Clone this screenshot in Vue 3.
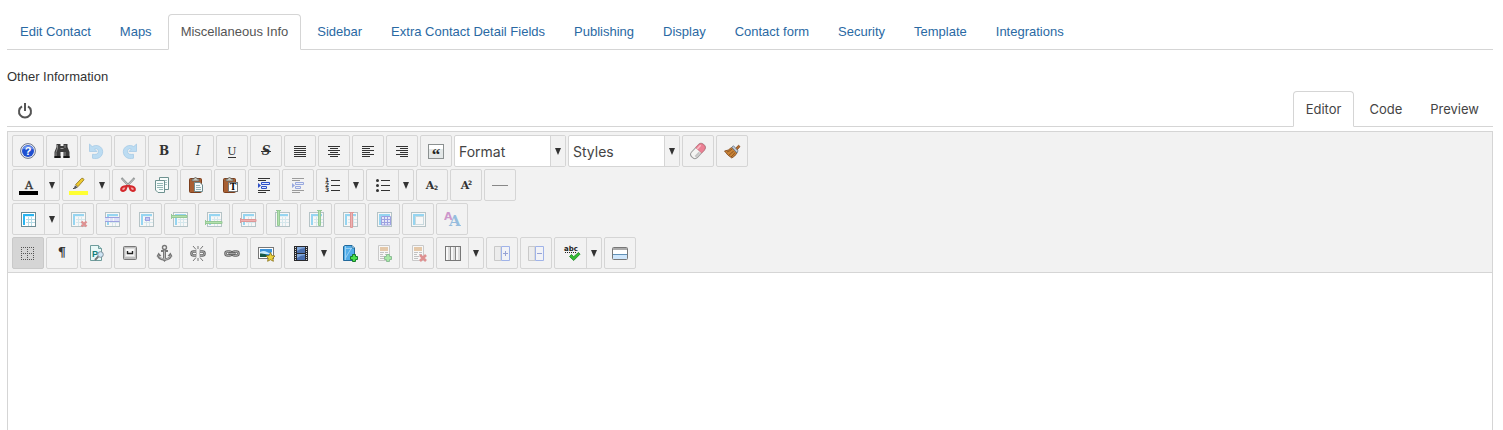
<template>
  <div class="page">
    <ul class="tabs">
      <li v-for="tab in tabs" :key="tab">
        <a href="#" :class="{ active: tab === currentTab }" @click.prevent="currentTab = tab">{{ tab }}</a>
      </li>
    </ul>

    <label class="field-label" for="misc">Other Information</label>

    <div class="editor-head">
      <button type="button" class="power" aria-label="Toggle editor">
        <svg width="16" height="16" viewBox="0 0 16 16" fill="none" stroke="#555" stroke-width="2">
          <path d="M5 3.4A6 6 0 1 0 11 3.4" />
          <path d="M8 0V8" />
        </svg>
      </button>
      <ul class="tabs modes">
        <li v-for="mode in modes" :key="mode">
          <a href="#" :class="{ active: mode === currentMode }" @click.prevent="currentMode = mode">{{ mode }}</a>
        </li>
      </ul>
    </div>

    <div class="editor">
      <div class="toolbar">
        <div v-for="(row, i) in rows" :key="i" class="row">
          <template v-for="item in row" :key="item.name">
            <div v-if="item.type === 'select'" class="picker">
              <select :aria-label="item.name">
                <option>{{ item.name }}</option>
              </select>
              <span class="picker-arrow">
                <svg width="6" height="7" viewBox="0 0 6 7"><path d="M0 0H6L3 7Z" fill="#333" /></svg>
              </span>
            </div>
            <div v-else class="tool" :class="{ split: item.type === 'split', disabled: item.off, pressed: item.on }">
              <button type="button" class="main" :aria-label="item.name" :disabled="item.off">
                <svg width="20" height="20" viewBox="0 0 20 20" v-html="icons[item.name]"></svg>
              </button>
              <button v-if="item.type === 'split'" type="button" class="more" :aria-label="item.name + ' options'">
                <svg width="6" height="7" viewBox="0 0 6 7"><path d="M0 0H6L3 7Z" fill="#333" /></svg>
              </button>
            </div>
          </template>
        </div>
      </div>
      <textarea id="misc" v-model="content"></textarea>
    </div>
  </div>
</template>

<script setup>
import { ref } from 'vue'

const tabs = [
  'Edit Contact', 'Maps', 'Miscellaneous Info', 'Sidebar', 'Extra Contact Detail Fields',
  'Publishing', 'Display', 'Contact form', 'Security', 'Template', 'Integrations'
]
const modes = ['Editor', 'Code', 'Preview']

const currentTab = ref('Miscellaneous Info')
const currentMode = ref('Editor')
const content = ref('')

const btn = (name) => ({ name })
const off = (name) => ({ name, off: true })
const split = (name) => ({ name, type: 'split' })
const select = (name) => ({ name, type: 'select' })

const rows = [
  [
    ...['help', 'find'].map(btn), ...['undo', 'redo'].map(off),
    ...['bold', 'italic', 'underline', 'strike', 'justify', 'center', 'left', 'right', 'quote'].map(btn),
    select('Format'), select('Styles'), btn('eraser'), btn('brush')
  ],
  [
    split('color'), split('highlight'),
    ...['cut', 'copy', 'paste', 'pastetext', 'indent'].map(btn), off('outdent'),
    split('numlist'), split('bullist'), ...['sub', 'sup', 'hr'].map(btn)
  ],
  [
    split('table'),
    ...['tabledelete', 'rowprops', 'cellprops', 'rowbefore', 'rowafter', 'rowdelete',
      'colbefore', 'colafter', 'coldelete', 'splitcells', 'mergecells', 'textcase'].map(off)
  ],
  [
    { name: 'guides', on: true },
    ...['pilcrow', 'preview', 'nbsp', 'anchor', 'unlink', 'link', 'image'].map(btn),
    split('media'), btn('book'), off('articleadd'), off('articleremove'),
    split('columns'), off('columnadd'), off('columnremove'), split('spell'), btn('panel')
  ]
]

// horizontal strokes from [x1, x2, y] triples
const lines = (list, color = '#333') =>
  `<path d="${list.map(([a, b, y]) => `M${a} ${y}H${b}`).join('')}" stroke="${color}" fill="none"/>`

const glyph = (text, x = 10, size = 11, extra = '') =>
  `<text x="${x}" y="14" font-family="DejaVu Serif" font-size="${size}" text-anchor="middle" fill="#333" ${extra}>${text}</text>`

const align = (a, b) =>
  lines([5.5, 7.5, 9.5, 11.5, 13.5, 15.5].map((y, i) => (i % 2 ? [a, b, y] : [4, 16, y])))

const grid = (cells = '<path d="M8 10.5H17M8 13.5H17M10.5 8V17M13.5 8V17" stroke="#b4dbe6"/>') => `
  <rect x="3.5" y="3.5" width="14" height="14" fill="#fff" stroke="#6c8b93"/>
  <path d="M5 5H16V7H7V16H5Z" fill="#29b4f0"/>
  <path d="M7.5 7.5H16" stroke="#d4eef8"/>${cells}`

const cross = '<path d="M13.5 12.5L18.5 17.5M18.5 12.5L13.5 17.5" stroke="#c81e1e" stroke-width="2.4"/>'
const greenPlus = '<path d="M12.5 11.5H15.5V13.5H17.5V16.5H15.5V18.5H12.5V16.5H10.5V13.5H12.5Z" fill="#4ae04a" stroke="#167c2b"/>'

const indent = `${lines([[4, 16, 3.5], [4, 12, 5.5], [4, 16, 15.5], [4, 12, 17.5]])}
  <path d="M7.5 7.5H15.5V9.5H7.5ZM7.5 11.5H12.5V13.5H7.5Z" fill="#dfe8ff" stroke="#2d50c8"/>
  <path d="M4 8L7 10.5L4 13Z" fill="#2d50c8"/>`

const clipboard = `<rect x="3.5" y="3.5" width="12" height="14" rx="1" fill="#a85f32" stroke="#7b3e1c"/>
  <path d="M6 6V4H8C8 2 11 2 11 4H13V6Z" fill="#c9c9bf" stroke="#62625c" stroke-width=".8"/>`

const article = `<path d="M4.5 2.5H15.5V17.5H4.5Z" fill="#fff" stroke="#999"/>
  <rect x="6" y="4" width="8" height="4" fill="#d59752"/>
  ${lines([[6, 10, 9.5], [11, 14, 9.5], [6, 9, 11.5], [11, 14, 11.5], [6, 11, 13.5], [6, 10, 15.5]], '#888')}`

const chain = `<g fill="none"><g stroke="#666" stroke-width="2.6"><rect x="3.5" y="8.5" width="6" height="4" rx="2"/><rect x="10.5" y="8.5" width="6" height="4" rx="2"/></g>
  <g stroke="#bbb" stroke-width=".8"><rect x="3.5" y="8.5" width="6" height="4" rx="2"/><rect x="10.5" y="8.5" width="6" height="4" rx="2"/></g></g>`

const halfColumn = (sign) => `<path d="M3 3.5H9V17.5H2.5V3.5Z" fill="#e6e6e6" stroke="#999"/>
  <path d="M9.5 3.5H17.5V17.5H9.5Z" fill="#f3f6ff" stroke="#3f68dc"/>
  <path d="${sign}" stroke="#2a45b4" fill="none"/>`

const undo = `<path d="M3.5 3V10.5H11L8.6 8C11 7 12.6 8.7 12.4 11C12.2 13 10 13.8 6.5 13.3V17.2C12 18.6 16.5 16 16.7 10.7C16.7 5.5 10.7 2.8 6.2 5.6Z" fill="#7cc3f2" stroke="#3f93d4" stroke-width=".7"/>`

const icons = {
  help: `<circle cx="10" cy="10" r="7.4" fill="#eef1f6" stroke="#69718a"/>
    <circle cx="10" cy="10" r="6" fill="#1f4fd0"/><path d="M4.6 8.5A5.6 5.6 0 0 1 15.4 8.5Q10 6 4.6 8.5Z" fill="#6c93ee"/>
    <text x="10" y="14" font-family="Liberation Sans" font-weight="bold" font-size="11" text-anchor="middle" fill="#fff">?</text>`,
  find: `<path d="M4.5 3H8.5V5H11.5V3H15.5V6L17.5 11V17H11.5V11H8.5V17H2.5V11L4.5 6Z" fill="#3c3c3c"/>
    <path d="M5.5 4V7L4 11.5V15.5M13 4V7M13 11V15.5" stroke="#8b8b8b" fill="none"/><path d="M8.5 7.5H11.5" stroke="#999"/>
    <path d="M2.5 16H8.5M11.5 16H17.5" stroke="#161616" stroke-width="2"/>`,
  undo,
  redo: `<g transform="matrix(-1 0 0 1 20 0)">${undo}</g>`,
  bold: glyph('B', 10, 12, 'font-weight="bold"'),
  italic: glyph('I', 10, 12, 'font-style="italic"'),
  underline: glyph('U', 10, 11) + lines([[6, 14, 16.5]]),
  strike: glyph('S', 10, 12, 'font-style="italic" font-weight="bold"') + lines([[5, 15, 10.5]]),
  justify: align(4, 16),
  center: align(6, 14),
  left: align(4, 12),
  right: align(8, 16),
  quote: `<rect x="2.5" y="3.5" width="15" height="14" fill="#e3e7e7" stroke="#8b9090"/><path d="M3 4H17V8H3Z" fill="#fff"/>
    <text x="10" y="19" font-family="Liberation Serif" font-weight="bold" font-size="17" text-anchor="middle" fill="#222">“</text>`,
  eraser: `<g transform="rotate(-47 10 10)"><rect x="1.5" y="6" width="17" height="8" rx="3.4" fill="#f4f4f2" stroke="#999"/>
    <path d="M11 6H15.2Q18.5 6.4 18.5 10T15.2 14H11Z" fill="#ec8195" stroke="#cc7180" stroke-width=".8"/>
    <path d="M4 12H10" stroke="#c4c4c4" stroke-width="2"/><path d="M11 8H16" stroke="#f9bdc7" stroke-width="1.5"/></g>`,
  brush: `<path d="M13 8L16.5 4.2L18 5.6L15 9Z" fill="#b96d2d" stroke="#7c451b" stroke-width=".8"/>
    <path d="M2.5 10Q6.5 9.8 9.5 6.5L15 12Q13 15.5 9.8 17Q5.5 14.5 2.5 10Z" fill="#c98337" stroke="#7c451b" stroke-width=".8"/>
    <path d="M5 11Q8 10 10 8M7 14Q10 12 11.5 10M9 16Q11.5 14 13 11.5" stroke="#7f4b1b" fill="none" stroke-width=".8"/>
    <path d="M9.8 6.2L11.5 4.8L16 9.8L15 12Z" fill="#c7d0da" stroke="#5f6f83" stroke-width=".8"/>`,

  color: glyph('A', 11, 11, 'stroke="#333" stroke-width=".3"') + '<rect x="1" y="16" width="19" height="4"/>',
  highlight: `<path d="M5 13.5Q7 13.7 8.5 12.5" stroke="#444" fill="none"/><path d="M7 10.2L9.8 12.6L8 13.3L6 13Z" fill="#555"/>
    <path d="M7.6 9.6L13.5 3.4Q15.5 2.6 16 4.8L10 11.7Z" fill="#edc92f" stroke="#8d741d" stroke-width=".8"/>
    <rect x="1" y="16" width="19" height="4" fill="#ff3"/>`,
  cut: `<path d="M3.5 3L13 13M16.5 3L7 13" stroke="#858a8a" stroke-width="2"/><path d="M4 3.5L11 11M16 3.5L9 11" stroke="#e5e8e8" stroke-width=".7"/>
    <g fill="#f2a3a5" stroke="#d4282c" stroke-width="2"><path d="M9 11L6 11.4Q2.6 12.6 3.2 15Q5 17.2 7.5 14.8Z"/><path d="M11 11L14 11.4Q17.4 12.6 16.8 15Q15 17.2 12.5 14.8Z"/></g>`,
  copy: `<path d="M7.5 2.5H16.5V14.5H10L7.5 12Z" fill="#f7fcfb" stroke="#6e9290"/>
    <path d="M9 5.5H15M9 7.5H15M9 9.5H15" stroke="#a4c2c0"/>
    <path d="M3.5 5.5H12.5V17.5H6L3.5 15Z" fill="#f7fcfb" stroke="#6e9290"/><path d="M5 8.5H11M5 10.5H11M5 12.5H11M7 14.5H11" stroke="#93b8b5"/>`,
  paste: `${clipboard}<path d="M8.5 7.5H14L16.5 10V16.5H8.5Z" fill="#f4f9f9" stroke="#6e8b8f"/>
    <path d="M10 10.5H14M10 12.5H15M10 14.5H15" stroke="#93b3b6"/>`,
  pastetext: `${clipboard}<rect x="8.5" y="7.5" width="9" height="9" fill="#fff" stroke="#777"/>
    <text x="13" y="15" font-family="Liberation Serif" font-weight="bold" font-size="10" text-anchor="middle">T</text>`,
  indent,
  outdent: indent,
  numlist: `${lines([[9, 18, 5.5], [9, 18, 10.5], [9, 18, 15.5]])}
    <g font-family="DejaVu Sans" font-weight="bold" font-size="6" fill="#333"><text x="3" y="7">1</text><text x="3" y="12">2</text><text x="3" y="17">3</text></g>`,
  bullist: `${lines([[9, 18, 5.5], [9, 18, 10.5], [9, 18, 15.5]])}
    <g fill="#333"><circle cx="5.5" cy="5.5" r="1.5"/><circle cx="5.5" cy="10.5" r="1.5"/><circle cx="5.5" cy="15.5" r="1.5"/></g>`,
  sub: glyph('A', 8, 11, 'font-weight="bold"') + '<text x="12" y="15" font-family="DejaVu Sans" font-weight="bold" font-size="6" fill="#333">2</text>',
  sup: glyph('A', 9, 11, 'font-weight="bold"') + '<text x="12" y="10" font-family="DejaVu Sans" font-weight="bold" font-size="6" fill="#333">2</text>',
  hr: lines([[2, 18, 10.5]], '#888'),

  table: grid(),
  tabledelete: grid() + cross,
  rowprops: grid() + '<path d="M3 8.5H17.5V12.5H3Z" fill="#c3cbff"/><path d="M3 8.5H17.5M3 12.5H17.5" stroke="#3740cc"/><path d="M7.5 9V12M11.5 9V12" stroke="#fff"/>',
  cellprops: grid() + '<rect x="9.5" y="8.5" width="4" height="3" fill="#8d95f5" stroke="#3740cc"/>',
  rowbefore: grid() + '<path d="M1.5 5V10" stroke="#259629"/><path d="M1.5 6.5H17V8.5H1.5Z" fill="#69d05a" stroke="#259629"/>',
  rowafter: grid() + '<path d="M1.5 11V16" stroke="#259629"/><path d="M1.5 12.5H18V14.5H1.5Z" fill="#69d05a" stroke="#259629"/>',
  rowdelete: grid() + '<path d="M2.5 9V14" stroke="#c42b2b"/><path d="M2.5 10.5H18V12.5H2.5Z" fill="#e66" stroke="#c42b2b"/>',
  colbefore: grid() + '<path d="M4 1.5H9" stroke="#259629"/><path d="M5.5 1.5H7.5V16.5H5.5Z" fill="#69d05a" stroke="#259629"/>',
  colafter: grid() + '<path d="M11 1.5H16" stroke="#259629"/><path d="M12.5 1.5H14.5V16.5H12.5Z" fill="#69d05a" stroke="#259629"/>',
  coldelete: grid() + '<path d="M9 3.5H14" stroke="#c42b2b"/><path d="M10.5 3.5H12.5V18.5H10.5Z" fill="#e66" stroke="#c42b2b"/>',
  splitcells: grid('<path d="M7.5 7.5H16.5V16H7.5ZM7.5 10.5H16.5M7.5 13.5H16.5M10.5 7V16M13.5 7V16" fill="#d9dcff" stroke="#3740cc"/>'),
  mergecells: grid('<rect x="7.5" y="7.5" width="8" height="8" fill="#fff" stroke="#96bcc8"/>'),
  textcase: `<text x="2" y="11" font-family="DejaVu Sans" font-weight="bold" font-size="11" fill="#a22b9e">A</text>
    <text x="7" y="17" font-family="DejaVu Serif" font-weight="bold" font-size="15" fill="#297fc7">A</text>`,

  guides: `<g fill="none" stroke="#555" stroke-dasharray="1 1"><path d="M3 4.5H16M3 10.5H16M3 16.5H16"/>
    <path d="M3.5 4V17M9.5 4V17M15.5 4V17"/></g>`,
  pilcrow: '<text x="10" y="14" font-family="DejaVu Serif" font-weight="bold" font-size="13" text-anchor="middle" fill="#333">¶</text>',
  preview: `<path d="M4.5 2.5H12.5L15.5 5.5V17.5H4.5Z" fill="#e9f8f7" stroke="#6e9c9c"/><path d="M12.5 2.5V5.5H15.5" fill="#bedcdb" stroke="#6e9c9c"/>
    <text x="6" y="14" font-family="Liberation Sans" font-weight="bold" font-size="9" fill="#137f7c">P</text>
    <path d="M12.4 13.4L9 17" stroke="#777" stroke-width="2"/><circle cx="14.5" cy="11.5" r="2.8" fill="#cfe5f5" stroke="#7f919c"/>`,
  nbsp: `<rect x="3.5" y="3.5" width="13" height="13" rx="1" fill="#bdbdbd" stroke="#777"/><rect x="5.5" y="5.5" width="9" height="8" fill="#f7f7f7" stroke="#ddd"/>
    <path d="M7.5 8V10.5H12.5V8" fill="none" stroke="#222" stroke-width="1.4"/>`,
  anchor: `<g fill="none" stroke="#777"><circle cx="10.5" cy="4.5" r="2" stroke-width="1.4"/><path d="M7 8H14" stroke-width="2"/>
    <path d="M10.5 7V17" stroke-width="3"/><path d="M4 12Q5 16.5 10.5 16.5T17 12" stroke-width="2.4"/></g>
    <path d="M2.5 13.5L4.5 9.5L7.5 13ZM18.5 13.5L16.5 9.5L13.5 13ZM8 16L10.5 19L13 16Z" fill="#777"/>
    <path d="M10.5 7.5V16M4.5 12.5Q6 16 10.5 16.3T16.5 12.5" stroke="#ccc" fill="none" stroke-width=".8"/>`,
  unlink: `${chain}<path d="M8.5 6H11.5V15H8.5Z" fill="#f2f2f2"/><path d="M5 3L8 6.5M15 3L12 6.5M10 3V6M5 18L8 14.5M15 18L12 14.5M10 15V18" stroke="#777"/>`,
  link: `${chain}<path d="M6.5 10.5H13.5" stroke="#444" stroke-width="2"/><path d="M7 10.5H13" stroke="#ccc" stroke-width=".7"/>`,
  image: `<rect x="2.5" y="4.5" width="15" height="11" fill="#fff" stroke="#777"/><rect x="4" y="6" width="12" height="8" fill="#3c93d9"/>
    <path d="M4 9Q8 7 11 9T16 9V11H4Z" fill="#c7e9fb"/><path d="M4 10.5Q8 10 12 12.5H16V14H4Z" fill="#175a46"/>
    <path d="M14.5 9.5L15.9 12.6L19 13L16.8 15.2L17.4 18.3L14.5 16.7L11.6 18.3L12.2 15.2L10 13L13.1 12.6Z" fill="#eed33c" stroke="#8a7218" stroke-width=".8"/>`,
  media: `<rect x="4" y="3" width="14" height="15" fill="#29292c"/><path d="M5.5 4V18M16.5 4V18" stroke="#ddd" stroke-dasharray="1 1"/>
    <path d="M7 4H15V10H7ZM7 11H15V17H7Z" fill="#4a6fae"/><path d="M7 8Q11 5 15 5V4H7ZM7 15Q11 12 15 12V11H7Z" fill="#83a9dc"/>`,
  book: `<path d="M3.5 3.5L5 2.5H12L14.5 5V17.5H3.5Z" fill="#52ade9" stroke="#22699b"/><path d="M5.5 3V17M5.5 15L12 4M5.5 5.5H12" stroke="#abd9f5" fill="none" stroke-width=".8"/>
    <path d="M12 2.5V5H14.5" fill="#d9effb" stroke="#22699b" stroke-width=".8"/>${greenPlus}`,
  articleadd: article + greenPlus,
  articleremove: `${article}<path d="M12 12L18 18M18 12L12 18" stroke="#c81e1e" stroke-width="2.6"/>`,
  columns: `<rect x="3.5" y="3.5" width="15" height="14" fill="#f8f8f8" stroke="#777"/><path d="M7 4V17M12 4V17M17 4V17" stroke="#ddd" stroke-width="2"/>
    <path d="M8.5 4V17M13.5 4V17" stroke="#888"/>`,
  columnadd: halfColumn('M11 10.5H16M13.5 8V13'),
  columnremove: halfColumn('M11 10.5H16'),
  spell: `<text x="4" y="8" font-family="DejaVu Sans" font-weight="bold" font-size="7" fill="#222">abc</text>
    <path d="M5 9.5H16" stroke="#222" stroke-dasharray="1 1"/>
    <path d="M9.5 13.5L11.5 11.5L13.7 13.7L18.5 9.5L20 11.2L13.7 17.5Z" fill="#35bd35" stroke="#168321" stroke-width=".8"/>`,
  panel: `<rect x="2.5" y="4.5" width="15" height="12" rx="1" fill="#fff" stroke="#777"/><path d="M3 5H17V7H3Z" fill="#aaa"/>
    <path d="M3 11H17V16H3Z" fill="#cfe6fb"/><path d="M3 11.5H17" stroke="#6292b8"/>`
}
</script>

<style>
body {
  margin: 0;
  background: #fff;
}
</style>

<style scoped>
.page {
  box-sizing: border-box;
  display: flex;
  flex-direction: column;
  min-height: 100vh;
  padding: 14px 10px 0 7px;
  font-family: "Liberation Sans", Arial, sans-serif;
  font-size: 13px;
  line-height: 18px;
  color: #333;
}

.tabs {
  display: flex;
  gap: 3px;
  margin: 0;
  padding: 0;
  list-style: none;
  border-bottom: 1px solid #d5d5d5;
}

.tabs li {
  margin-bottom: -1px;
}

.tabs a {
  display: block;
  padding: 8px 12px;
  border: 1px solid transparent;
  border-radius: 4px 4px 0 0;
  color: #2a69a3;
  text-decoration: none;
  white-space: nowrap;
}

.tabs a.active {
  background: #fff;
  border-color: #d5d5d5;
  border-bottom-color: #fff;
  color: #555;
}

.field-label {
  margin-top: 18px;
}

.editor-head {
  display: flex;
  align-items: flex-end;
  justify-content: space-between;
  margin-top: 5px;
  border-bottom: 1px solid #d5d5d5;
}

.power {
  display: flex;
  padding: 10px 10px 7px;
  border: none;
  background: none;
  cursor: pointer;
}

.modes {
  gap: 2px;
  padding-right: 1px;
  border-bottom: none;
  font-family: Inter, sans-serif;
}

.modes a,
.modes a.active {
  color: #444;
}

.editor {
  display: flex;
  flex: 1;
  flex-direction: column;
  margin-top: 4px;
  border: 1px solid #d5d5d5;
  border-bottom: none;
}

.toolbar {
  display: flex;
  flex-direction: column;
  gap: 2px;
  padding: 3px 4px;
  background: #f2f2f2;
  border-bottom: 1px solid #d5d5d5;
}

.row {
  display: flex;
  flex-wrap: wrap;
  gap: 2px;
}

.tool {
  display: flex;
  box-sizing: border-box;
  height: 32px;
  border: 1px solid #d5d5d5;
  border-radius: 2px;
}

.tool button {
  display: flex;
  align-items: center;
  padding: 0 5px;
  border: none;
  background: none;
  cursor: pointer;
}

.tool svg {
  overflow: visible;
}

.tool.split .main {
  padding-right: 6px;
}

.tool .more {
  padding: 0 4px;
  border-left: 1px solid #d5d5d5;
}

.tool.pressed {
  background: #d5d5d5;
  border-color: #c9c9c9;
}

.tool.disabled svg {
  opacity: 0.45;
}

.picker {
  position: relative;
  width: 112px;
  height: 32px;
}

.picker select {
  box-sizing: border-box;
  width: 100%;
  height: 100%;
  padding: 0 20px 0 4px;
  border: 1px solid #d5d5d5;
  border-radius: 2px;
  background: #fff;
  color: #444;
  font-family: Inter, sans-serif;
  font-size: 14px;
  appearance: none;
}

.picker-arrow {
  position: absolute;
  top: 1px;
  right: 1px;
  bottom: 1px;
  display: flex;
  align-items: center;
  padding: 0 4px;
  border-left: 1px solid #d5d5d5;
  background: #f2f2f2;
  pointer-events: none;
}

textarea {
  flex: 1;
  padding: 8px;
  border: none;
  outline: none;
  resize: none;
  font: inherit;
}
</style>
